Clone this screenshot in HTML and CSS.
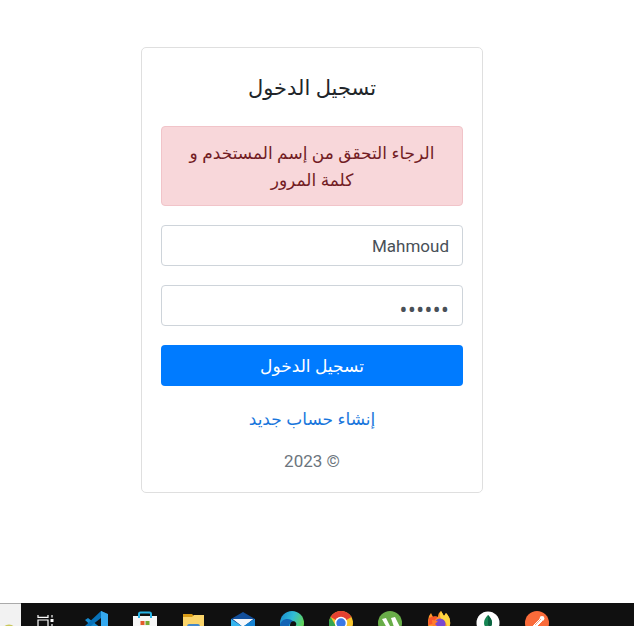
FILE: index.html
```html
<!DOCTYPE html>
<html lang="ar" dir="rtl">
<head>
<meta charset="utf-8">
<meta name="viewport" content="width=device-width, initial-scale=1">
<title>تسجيل الدخول</title>
<link rel="stylesheet" href="styles.css">
</head>
<body>
<main class="page">
  <form class="card">
    <h1 class="title">تسجيل الدخول</h1>
    <div class="alert" role="alert">الرجاء التحقق من إسم المستخدم و كلمة المرور</div>
    <input class="field" type="text" aria-label="إسم المستخدم" value="Mahmoud">
    <input class="field field-password" type="password" aria-label="كلمة المرور" value="123456">
    <button class="submit" type="button">تسجيل الدخول</button>
    <div class="links">
      <a class="register" href="#">إنشاء حساب جديد</a>
      <p class="copyright">© 2023</p>
    </div>
  </form>
</main>
<footer class="taskbar" dir="ltr">
  <div class="search"><svg width="21" height="22" viewBox="0 0 21 22"><path d="M4 23q1-2.500 5-2.500t5 2.500z" fill="#c9c75a"/></svg></div>
  <div class="apps">
    <span class="app"><svg viewBox="0 0 24 24" fill="none" stroke="#fff" stroke-width="1.2"><path d="M3 4v2.300h10V4M3 20V9h10v11M17 4v2.500M17 13v8"/><path d="M15.500 8h3v3h-3z" fill="#fff" stroke="none"/></svg></span>
    <span class="app"><svg viewBox="0 0 24 24"><path d="M17 0l6 3v18l-6 3L1 9l3-2 13 10z" fill="#168bd0"/><path d="M17 0v7L4 17l-3-2z" fill="#0872b9"/><path d="M17 0l7 3v18l-7 3z" fill="#35a9ef"/></svg></span>
    <span class="app"><svg viewBox="0 0 24 24"><path d="M0 5h24v17q0 2-2 2H2q-2 0-2-2z" fill="#f7f7f7"/><path d="M6 7V3q0-1.500 1.500-1.500h9q1.500 0 1.500 1.500v4" fill="none" stroke="#28b5e8" stroke-width="2"/><path d="M7.500 10h4v4h-4z" fill="#e35b2c"/><path d="M12.500 10h4v4h-4z" fill="#78a832"/><path d="M7.500 15h4v4h-4z" fill="#2b9fe0"/><path d="M12.500 15h4v4h-4z" fill="#f3b62d"/></svg></span>
    <span class="app"><svg viewBox="0 0 24 24"><path d="M1 3h9l2 2h10v17H1z" fill="#d99b16"/><path d="M1 6h9l2-2h10v18H1z" fill="#fbd56b"/><path d="M5 22v-6q0-3 2-3h9q2 0 2 3v6z" fill="#4388c9"/></svg></span>
    <span class="app"><svg viewBox="0 0 24 24"><path d="M0 8l12-7 12 7v15H0z" fill="#124f9b"/><path d="M2 8h20l-10 8z" fill="#fff"/><path d="M0 8l12 8 12-8v15H0z" fill="#35b5ee"/><path d="M2 8h20l-10 7z" fill="#f5f8fc"/><path d="M12 15.500L24 8v15z" fill="#1683d3"/></svg></span>
    <span class="app"><svg viewBox="0 0 24 24"><defs><linearGradient id="edge" x1="0" y1="0" x2="1" y2=".4"><stop stop-color="#1786cf"/><stop offset=".55" stop-color="#31bed5"/><stop offset="1" stop-color="#62d35b"/></linearGradient></defs><circle cx="12" cy="12" r="12" fill="url(#edge)"/><path d="M0 14C1 7 10 6 14 11c-4 0-6 3-4 7 2 3 6 4 8 4C9 27 0 22 0 14z" fill="#1264b5"/><path d="M10 14c0-4 5-5 6-2 1 2-1 3-1 5h-4q-1-1-1-3z" fill="#101010"/></svg></span>
    <span class="app"><svg viewBox="0 0 24 24"><circle cx="12" cy="12" r="12" fill="#f8c52d"/><path d="M12 12L1.600 6A12 12 0 0 1 22.400 6z" fill="#e34132"/><path d="M1.600 6A12 12 0 0 0 12 24l5-9-10 0z" fill="#35a550"/><circle cx="12" cy="12" r="6.200" fill="#fff"/><circle cx="12" cy="12" r="4.700" fill="#3978e7"/></svg></span>
    <span class="app"><svg viewBox="0 0 24 24"><circle cx="12" cy="12" r="12" fill="#69ad49"/><path d="M4 8l4-1 4 8q2 3 4 1L13 7l4-1 6 12-3 2-3-1q-6 3-8-2z" fill="#fff"/></svg></span>
    <span class="app"><svg viewBox="0 0 24 24"><path d="M2 5l2-3 2 4q3-1 5 0 0-4 3-6l3 5 2-3q5 5 4 12-1 10-11 10T1 13q0-5 1-8z" fill="#ff982b"/><path d="M14 0l3 5 2-3q5 5 4 12l-3 3q0-7-6-9-2-4 0-8z" fill="#ffd640"/><path d="M2 7q5-3 9-1L8 9l-1 4-6 1z" fill="#f9572c"/><circle cx="13" cy="13" r="5.500" fill="#7949cf"/><path d="M5 9l6 1-3 3 4 4-6 2z" fill="#ff7d2b"/></svg></span>
    <span class="app"><svg viewBox="0 0 24 24"><circle cx="12" cy="12" r="11.500" fill="#fff"/><path d="M12 4q8 8 0 15-8-7 0-15z" fill="#168653"/><path d="M12 4q8 8 0 15z" fill="#0a6340"/><path d="M12 14v7" stroke="#53715e"/></svg></span>
    <span class="app"><svg viewBox="0 0 24 24"><circle cx="12" cy="12" r="12" fill="#fa6b3a"/><path d="M9 14l6-6 2 2-6 6-4 1zM5 18l5-3" fill="#fff" stroke="#fff"/><circle cx="17" cy="7.500" r="2.400" fill="#fff"/><path d="M10 14l6-6" stroke="#f5a287"/></svg></span>
  </div>
</footer>
</body>
</html>
```
FILE: styles.css
```css
* {
  box-sizing: border-box;
}

body {
  display: flex;
  flex-direction: column;
  min-height: 100vh;
  margin: 0;
  background: #fff;
  color: #212529;
  font-family: "Open Sans", "DejaVu Sans", sans-serif;
  font-size: 17px;
  line-height: 27px;
}

.page {
  flex: 1;
  padding: 47px 10px 47px 0;
  direction: ltr;
}

.card {
  display: flex;
  flex-direction: column;
  gap: 19px;
  width: 100%;
  max-width: 342px;
  margin: 0 auto;
  padding: 19px 19px 17px;
  border: 1px solid #dfdfdf;
  border-radius: 5px;
  direction: rtl;
  text-align: center;
}

.title {
  margin: 0;
  padding: 6px 0;
  font-size: 21px;
  font-weight: 400;
  line-height: 28px;
}

.alert {
  padding: 12px 22px;
  border: 1px solid #f1c4c9;
  border-radius: 4px;
  background: #f8d7da;
  color: #721c24;
}

.field {
  width: 100%;
  height: 41px;
  padding: 6px 13px;
  border: 1px solid #ced4da;
  border-radius: 4px;
  background: #fff;
  color: #495057;
  font-family: Roboto, "Open Sans", sans-serif;
  font-size: 17px;
}

.field-password {
  padding: 8px 13px 4px;
  font-family: "Open Sans", sans-serif;
  font-size: 22px;
}

.submit {
  height: 41px;
  padding: 0 13px;
  border: 0;
  border-radius: 4px;
  background: #007bff;
  color: #fff;
  font: inherit;
  font-weight: 500;
}

.links {
  display: flex;
  flex-direction: column;
  align-items: center;
  gap: 16px;
}

.register {
  color: #1976dc;
  text-decoration: none;
}

.copyright {
  margin: 0;
  color: #6c757d;
  font-family: Roboto, "Open Sans", sans-serif;
}

.taskbar {
  display: flex;
  height: 23px;
  overflow: hidden;
  background: #101010;
}

.search {
  flex: none;
  width: 21px;
  border-top: 1px solid #aaa;
  background: #f2f2f2;
}

.search svg {
  display: block;
}

.apps {
  display: flex;
  padding-left: 1px;
}

.app {
  display: flex;
  justify-content: center;
  width: 49px;
  padding-top: 8px;
}

.app svg {
  flex: none;
  width: 24px;
  height: 24px;
}
```
